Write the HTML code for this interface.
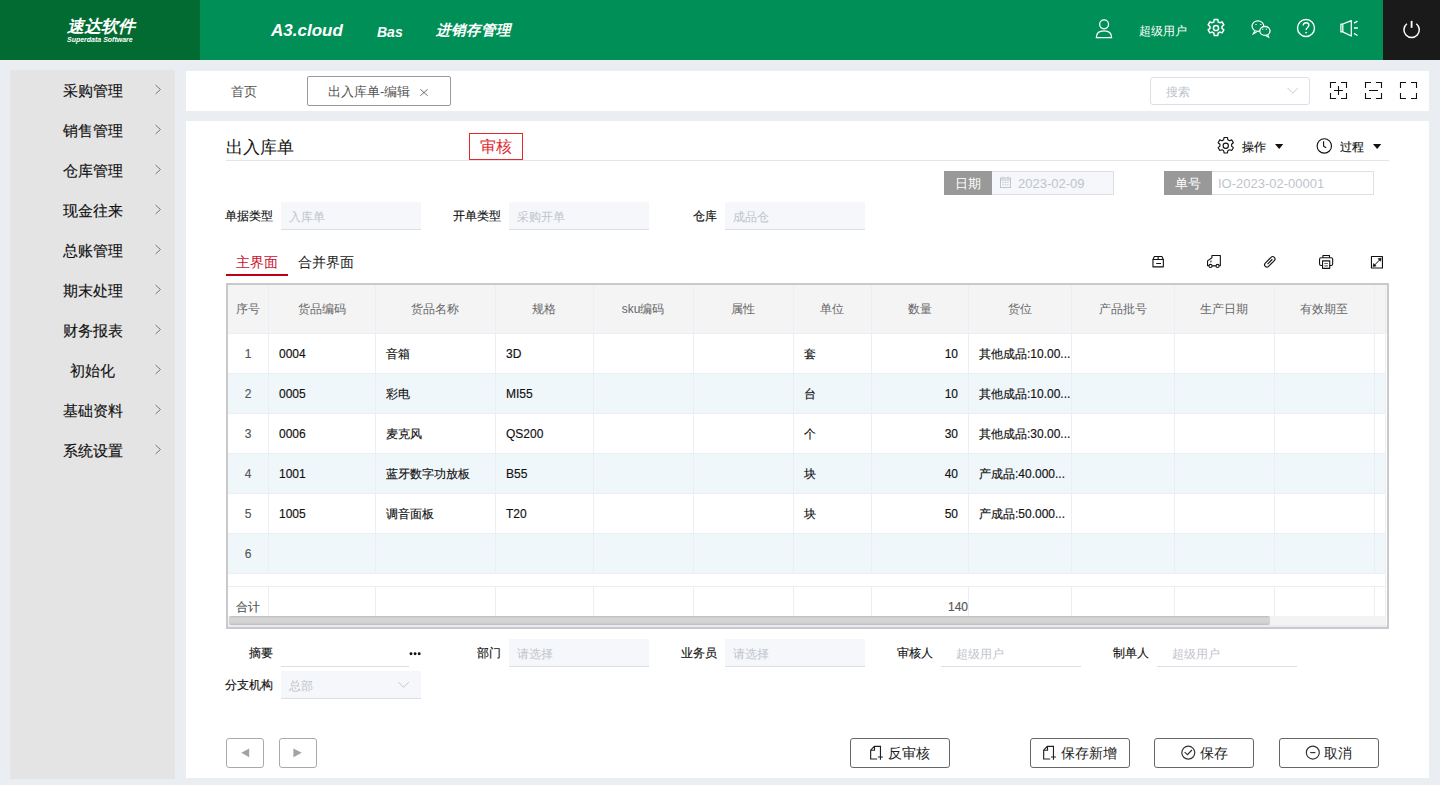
<!DOCTYPE html>
<html><head><meta charset="utf-8">
<style>
*{box-sizing:border-box;margin:0;padding:0}
html,body{width:1440px;height:785px;overflow:hidden;background:#eaedf1;font-family:"Liberation Sans",sans-serif;color:#333}
.a{position:absolute}
.hdr{left:0;top:0;width:1440px;height:60px;background:#008f56}
.logo{left:0;top:0;width:200px;height:60px;background:#016b31}
.wt{color:#fff;white-space:nowrap}
.side{left:10px;top:70px;width:165px;height:709px;background:#e4e4e4}
.si{position:absolute;left:0;width:165px;height:40px;font-size:15px;color:#111;text-align:center;line-height:40px;padding-top:1px;-webkit-text-stroke-width:0.15px}
.chev{position:absolute;left:153px;width:9px;height:9px}
.tabbar{left:186px;top:71px;width:1243px;height:40px;background:#fff}
.panel{left:186px;top:121px;width:1243px;height:657px;background:#fff}
.t{position:absolute;white-space:nowrap;line-height:1}
.lbl{font-size:12px;color:#111;-webkit-text-stroke-width:0.15px}
.inp{position:absolute;background:#f5f7fa;border-bottom:1px solid #dcdfe6;height:28px;width:140px}
.ph{position:absolute;font-size:12px;color:#c0c4cc;line-height:28px;left:8px;top:1px;white-space:nowrap}
.btn{position:absolute;top:738px;height:30px;width:100px;border:1px solid #666;border-radius:3px;background:#fff;font-size:14px;color:#333}
</style></head><body>
<!-- header -->
<div class="a hdr"></div>
<div class="a logo"></div>
<div class="a wt" style="left:67px;top:15px;font-size:17px;font-weight:bold;font-style:italic;letter-spacing:0px">速达软件</div>
<div class="a wt" style="left:67px;top:36px;font-size:7px;font-weight:bold;font-style:italic">Superdata Software</div>
<div class="a wt" style="left:271px;top:21px;font-size:17px;font-weight:bold;font-style:italic">A3.cloud</div>
<div class="a wt" style="left:377px;top:24px;font-size:14px;font-weight:bold;font-style:italic">Bas</div>
<div class="a wt" style="left:436px;top:21px;font-size:14.5px;font-weight:bold;font-style:italic">进销存管理</div>
<div class="a" style="left:1383px;top:0;width:57px;height:60px;background:#1a1a1a"></div>

<!-- header right -->
<div class="a wt" style="left:1139px;top:22.5px;font-size:12px">超级用户</div>
<svg class="a" style="left:1090px;top:10px" width="350" height="40" fill="none" stroke="#fff" stroke-width="1.3">
<circle cx="14.1" cy="14.35" r="4.45"/>
<path d="M6.3 27.7C6.3 23 9.8 20.9 14 20.9C18.2 20.9 21.6 23 21.6 27.7Z"/>
<g transform="translate(116,8)" stroke-width="1.5"><path d="M8.3 1.5h3.4l.5 2.4 1.6.9 2.3-.8 1.7 2.9-1.8 1.6v1.9l1.8 1.6-1.7 2.9-2.3-.8-1.6.9-.5 2.4H8.3l-.5-2.4-1.6-.9-2.3.8-1.7-2.9 1.8-1.6V8.5L2.2 6.9l1.7-2.9 2.3.8 1.6-.9z"/><circle cx="10" cy="10" r="2.6"/></g>
</svg>
<svg class="a" style="left:1240px;top:10px" width="200" height="40" fill="none" stroke="#fff" stroke-width="1.2">
<path d="M14.6 21.2 13.3 23.8 16.6 21.9"/>
<ellipse cx="17.9" cy="16.1" rx="5.9" ry="5.3"/>
<path d="M28 25.2 28.6 27 25.8 25.6" />
<ellipse cx="24.9" cy="20.9" rx="5.1" ry="4.4" fill="#008f56" stroke-width="1.3"/>
<path d="M15.4 14.55h1.2M20.2 14.55h1.2M22.1 19.3h1.2M25.7 19.3h1.2" stroke-width="1.1"/>
<circle cx="66" cy="18" r="8.5" stroke-width="1.4"/>
<path d="M63.2 15.6c0-1.7 1.3-2.9 2.9-2.9 1.6 0 2.8 1.1 2.8 2.6 0 2.1-2.8 2.2-2.8 4.6" stroke-width="1.4"/><circle cx="66.1" cy="22.6" r=".9" fill="#fff" stroke="none"/>
<path d="M100.9 14H102.8L111.3 10.6V26L102.8 21.9H100.9ZM102.8 14V21.9" stroke-width="1.25" stroke-linejoin="round"/>
<path d="M114 13.1 117.5 11.1M114 18H117.8M114 23.4 117.5 25.5" stroke-width="1.3"/>
<path d="M166.9 13.75A7.7 7.7 0 1 0 176.3 13.75" stroke-width="1.5"/>
<path d="M171.6 10.9V17.8" stroke-width="1.8"/>
</svg>

<!-- sidebar -->
<div class="a side">
<div class="si" style="top:0">采购管理</div>
<div class="si" style="top:40px">销售管理</div>
<div class="si" style="top:80px">仓库管理</div>
<div class="si" style="top:120px">现金往来</div>
<div class="si" style="top:160px">总账管理</div>
<div class="si" style="top:200px">期末处理</div>
<div class="si" style="top:240px">财务报表</div>
<div class="si" style="top:280px">初始化</div>
<div class="si" style="top:320px">基础资料</div>
<div class="si" style="top:360px">系统设置</div>
</div>
<svg class="a" style="left:0;top:0" width="180" height="480">
<g fill="none" stroke="#777" stroke-width="1">
<path d="M155.5 85 160.5 89.5 155.5 94"/><path d="M155.5 125 160.5 129.5 155.5 134"/><path d="M155.5 165 160.5 169.5 155.5 174"/>
<path d="M155.5 205 160.5 209.5 155.5 214"/><path d="M155.5 245 160.5 249.5 155.5 254"/><path d="M155.5 285 160.5 289.5 155.5 294"/>
<path d="M155.5 325 160.5 329.5 155.5 334"/><path d="M155.5 365 160.5 369.5 155.5 374"/><path d="M155.5 405 160.5 409.5 155.5 414"/>
<path d="M155.5 445 160.5 449.5 155.5 454"/></g></svg>

<!-- tab bar -->
<div class="a tabbar"></div>
<div class="a t" style="left:231px;top:85px;font-size:13px;color:#555">首页</div>
<div class="a" style="left:307px;top:76px;width:144px;height:30px;border:1px solid #999;border-radius:2px;background:#fff"></div>
<div class="a t" style="left:328px;top:85px;font-size:13px;color:#555">出入库单-编辑</div>
<svg class="a" style="left:419px;top:88px" width="10" height="10" stroke="#6a6a6a" stroke-width="0.95"><path d="M1.3 1.3 8.7 7.7M8.7 1.3 1.3 7.7"/></svg>
<div class="a" style="left:1150px;top:77px;width:160px;height:28px;border:1px solid #dcdfe6;border-radius:3px;background:#fff"></div>
<div class="a t" style="left:1166px;top:86px;font-size:12px;color:#c0c4cc">搜索</div>
<svg class="a" style="left:1286px;top:87px" width="13" height="8" fill="none" stroke="#c0c4cc" stroke-width="0.9"><path d="M1.6 1 6.7 6.1 11.8 1"/></svg>
<svg class="a" style="left:1329px;top:81px" width="90" height="19" fill="none" stroke="#111" stroke-width="1.1">
<path d="M1.5 7V1.5H7M12 1.5H17.5V7M17.5 12V17.5H12M7 17.5H1.5V12M36.5 7V1.5H42M47 1.5H52.5V7M52.5 12V17.5H47M42 17.5H36.5V12M71.5 7V1.5H77M82 1.5H87.5V7M87.5 12V17.5H82M77 17.5H71.5V12"/><path d="M5 9.5H14M9.5 5V14M40 9.5H49"/></svg>

<!-- main panel -->
<div class="a panel"></div>
<div class="a t" style="left:226px;top:139px;font-size:16.5px;color:#111">出入库单</div>
<div class="a" style="left:469px;top:133px;width:54px;height:27px;border:1px solid #e0282e"></div>
<div class="a t" style="left:480px;top:139px;font-size:16px;color:#e0282e">审核</div>
<div class="a" style="left:226px;top:160px;width:1163px;height:1px;background:#e4e4e4"></div>
<svg class="a" style="left:1216.15px;top:136.05px" width="19.5" height="19.5" viewBox="0 0 20 20" fill="none" stroke="#111" stroke-width="1.15" stroke-linejoin="round"><path d="M8.3 1.5h3.4l.5 2.4 1.6.9 2.3-.8 1.7 2.9-1.8 1.6v1.9l1.8 1.6-1.7 2.9-2.3-.8-1.6.9-.5 2.4H8.3l-.5-2.4-1.6-.9-2.3.8-1.7-2.9 1.8-1.6V8.5L2.2 6.9l1.7-2.9 2.3.8 1.6-.9z"/><circle cx="10" cy="10" r="2.7"/></svg>
<div class="a t" style="left:1242px;top:141px;font-size:12px;color:#111;-webkit-text-stroke-width:0.15px">操作</div>
<svg class="a" style="left:1274.7px;top:144px" width="9" height="6"><path d="M0 0h8.3L4.15 5z" fill="#111"/></svg>
<svg class="a" style="left:1315px;top:137px" width="18" height="18" fill="none" stroke="#111" stroke-width="1.1"><circle cx="9.3" cy="8.9" r="7.2"/><path d="M8.6 4.2V9.3L11.2 10.8"/></svg>
<div class="a t" style="left:1340px;top:141px;font-size:12px;color:#111;-webkit-text-stroke-width:0.15px">过程</div>
<svg class="a" style="left:1372.8px;top:144px" width="9" height="6"><path d="M0 0h8.3L4.15 5z" fill="#111"/></svg>

<div class="a" style="left:944px;top:171px;width:48px;height:24px;background:#999"></div>
<div class="a t" style="left:955px;top:177px;font-size:13px;color:#fff">日期</div>
<div class="a" style="left:992px;top:171px;width:122px;height:24px;background:#f5f7fa;border:1px solid #dcdfe6;border-left:0"></div>
<svg class="a" style="left:999px;top:176px" width="13" height="13" fill="none" stroke="#c0c4cc" stroke-width="1"><rect x="1.5" y="2" width="10" height="9.5"/><path d="M1.5 4H11.5M4 0.8V2.5M9 0.8V2.5"/><g fill="#c0c4cc" stroke="none"><rect x="3.5" y="5.8" width="1.2" height="1.2"/><rect x="5.9" y="5.8" width="1.2" height="1.2"/><rect x="8.3" y="5.8" width="1.2" height="1.2"/><rect x="3.5" y="8.2" width="1.2" height="1.2"/><rect x="5.9" y="8.2" width="1.2" height="1.2"/><rect x="8.3" y="8.2" width="1.2" height="1.2"/></g></svg>
<div class="a t" style="left:1018px;top:177px;font-size:13px;color:#c0c4cc">2023-02-09</div>
<div class="a" style="left:1164px;top:171px;width:48px;height:24px;background:#999"></div>
<div class="a t" style="left:1175px;top:177px;font-size:13px;color:#fff">单号</div>
<div class="a" style="left:1212px;top:171px;width:162px;height:24px;background:#fff;border:1px solid #dcdfe6;border-left:0"></div>
<div class="a t" style="left:1218px;top:177px;font-size:13px;color:#c0c4cc">IO-2023-02-00001</div>

<div class="a t lbl" style="left:225px;top:210px">单据类型</div>
<div class="inp" style="left:281px;top:202px"><span class="ph">入库单</span></div>
<div class="a t lbl" style="left:453px;top:210px">开单类型</div>
<div class="inp" style="left:509px;top:202px"><span class="ph">采购开单</span></div>
<div class="a t lbl" style="left:693px;top:210px">仓库</div>
<div class="inp" style="left:725px;top:202px"><span class="ph">成品仓</span></div>

<div class="a t" style="left:236px;top:255px;font-size:14px;color:#c8102e">主界面</div>
<div class="a" style="left:226px;top:274px;width:62px;height:2px;background:#c00018"></div>
<div class="a t" style="left:298px;top:255px;font-size:14px;color:#222">合并界面</div>
<!-- table -->
<div class="a" style="left:226px;top:283px;width:1163px;height:346px;border:2px solid #c9c9c9;background:#fff"></div>
<div class="a" style="left:228px;top:285px;width:1159px;height:48px;background:#f4f4f5"></div>
<div class="a" style="left:228px;top:374px;width:1157px;height:39px;background:#f0f7fb"></div>
<div class="a" style="left:228px;top:454px;width:1157px;height:39px;background:#f0f7fb"></div>
<div class="a" style="left:228px;top:534px;width:1157px;height:39px;background:#f0f7fb"></div>
<div class="a" style="left:228px;top:333px;width:1157px;height:1px;background:#ebeef5"></div>
<div class="a" style="left:228px;top:373px;width:1157px;height:1px;background:#ebeef5"></div>
<div class="a" style="left:228px;top:413px;width:1157px;height:1px;background:#ebeef5"></div>
<div class="a" style="left:228px;top:453px;width:1157px;height:1px;background:#ebeef5"></div>
<div class="a" style="left:228px;top:493px;width:1157px;height:1px;background:#ebeef5"></div>
<div class="a" style="left:228px;top:533px;width:1157px;height:1px;background:#ebeef5"></div>
<div class="a" style="left:228px;top:573px;width:1157px;height:1px;background:#ebeef5"></div>
<div class="a" style="left:228px;top:586px;width:1157px;height:1px;background:#ebeef5"></div>
<div class="a" style="left:268px;top:285px;width:1px;height:289px;background:#ebeef5"></div>
<div class="a" style="left:268px;top:586px;width:1px;height:30px;background:#ebeef5"></div>
<div class="a" style="left:375px;top:285px;width:1px;height:289px;background:#ebeef5"></div>
<div class="a" style="left:375px;top:586px;width:1px;height:30px;background:#ebeef5"></div>
<div class="a" style="left:495px;top:285px;width:1px;height:289px;background:#ebeef5"></div>
<div class="a" style="left:495px;top:586px;width:1px;height:30px;background:#ebeef5"></div>
<div class="a" style="left:593px;top:285px;width:1px;height:289px;background:#ebeef5"></div>
<div class="a" style="left:593px;top:586px;width:1px;height:30px;background:#ebeef5"></div>
<div class="a" style="left:693px;top:285px;width:1px;height:289px;background:#ebeef5"></div>
<div class="a" style="left:693px;top:586px;width:1px;height:30px;background:#ebeef5"></div>
<div class="a" style="left:793px;top:285px;width:1px;height:289px;background:#ebeef5"></div>
<div class="a" style="left:793px;top:586px;width:1px;height:30px;background:#ebeef5"></div>
<div class="a" style="left:871px;top:285px;width:1px;height:289px;background:#ebeef5"></div>
<div class="a" style="left:871px;top:586px;width:1px;height:30px;background:#ebeef5"></div>
<div class="a" style="left:968px;top:285px;width:1px;height:289px;background:#ebeef5"></div>
<div class="a" style="left:968px;top:586px;width:1px;height:30px;background:#ebeef5"></div>
<div class="a" style="left:1071px;top:285px;width:1px;height:289px;background:#ebeef5"></div>
<div class="a" style="left:1071px;top:586px;width:1px;height:30px;background:#ebeef5"></div>
<div class="a" style="left:1174px;top:285px;width:1px;height:289px;background:#ebeef5"></div>
<div class="a" style="left:1174px;top:586px;width:1px;height:30px;background:#ebeef5"></div>
<div class="a" style="left:1274px;top:285px;width:1px;height:289px;background:#ebeef5"></div>
<div class="a" style="left:1274px;top:586px;width:1px;height:30px;background:#ebeef5"></div>
<div class="a" style="left:1374px;top:285px;width:1px;height:289px;background:#ebeef5"></div>
<div class="a" style="left:1374px;top:586px;width:1px;height:30px;background:#ebeef5"></div>
<div class="a" style="left:1385px;top:285px;width:1px;height:341px;background:#ebeef5"></div>
<div class="a th" style="left:228px;width:40px">序号</div>
<div class="a th" style="left:268px;width:107px">货品编码</div>
<div class="a th" style="left:375px;width:120px">货品名称</div>
<div class="a th" style="left:495px;width:98px">规格</div>
<div class="a th" style="left:593px;width:100px">sku编码</div>
<div class="a th" style="left:693px;width:100px">属性</div>
<div class="a th" style="left:793px;width:78px">单位</div>
<div class="a th" style="left:871px;width:97px">数量</div>
<div class="a th" style="left:968px;width:103px">货位</div>
<div class="a th" style="left:1071px;width:103px">产品批号</div>
<div class="a th" style="left:1174px;width:100px">生产日期</div>
<div class="a th" style="left:1274px;width:100px">有效期至</div>
<div class="a td" style="left:228px;width:40px;top:348px;text-align:center;color:#555">1</div>
<div class="a td" style="left:279px;top:348px">0004</div>
<div class="a td" style="left:386px;top:348px">音箱</div>
<div class="a td" style="left:506px;top:348px">3D</div>
<div class="a td" style="left:804px;top:348px">套</div>
<div class="a td" style="left:871px;width:87px;top:348px;text-align:right">10</div>
<div class="a td" style="left:979px;top:348px">其他成品:10.00...</div>
<div class="a td" style="left:228px;width:40px;top:388px;text-align:center;color:#555">2</div>
<div class="a td" style="left:279px;top:388px">0005</div>
<div class="a td" style="left:386px;top:388px">彩电</div>
<div class="a td" style="left:506px;top:388px">MI55</div>
<div class="a td" style="left:804px;top:388px">台</div>
<div class="a td" style="left:871px;width:87px;top:388px;text-align:right">10</div>
<div class="a td" style="left:979px;top:388px">其他成品:10.00...</div>
<div class="a td" style="left:228px;width:40px;top:428px;text-align:center;color:#555">3</div>
<div class="a td" style="left:279px;top:428px">0006</div>
<div class="a td" style="left:386px;top:428px">麦克风</div>
<div class="a td" style="left:506px;top:428px">QS200</div>
<div class="a td" style="left:804px;top:428px">个</div>
<div class="a td" style="left:871px;width:87px;top:428px;text-align:right">30</div>
<div class="a td" style="left:979px;top:428px">其他成品:30.00...</div>
<div class="a td" style="left:228px;width:40px;top:468px;text-align:center;color:#555">4</div>
<div class="a td" style="left:279px;top:468px">1001</div>
<div class="a td" style="left:386px;top:468px">蓝牙数字功放板</div>
<div class="a td" style="left:506px;top:468px">B55</div>
<div class="a td" style="left:804px;top:468px">块</div>
<div class="a td" style="left:871px;width:87px;top:468px;text-align:right">40</div>
<div class="a td" style="left:979px;top:468px">产成品:40.000...</div>
<div class="a td" style="left:228px;width:40px;top:508px;text-align:center;color:#555">5</div>
<div class="a td" style="left:279px;top:508px">1005</div>
<div class="a td" style="left:386px;top:508px">调音面板</div>
<div class="a td" style="left:506px;top:508px">T20</div>
<div class="a td" style="left:804px;top:508px">块</div>
<div class="a td" style="left:871px;width:87px;top:508px;text-align:right">50</div>
<div class="a td" style="left:979px;top:508px">产成品:50.000...</div>
<div class="a td" style="left:228px;width:40px;top:548px;text-align:center;color:#555">6</div>
<div class="a td" style="left:236px;top:601px;color:#555">合计</div>
<div class="a td" style="left:871px;width:97px;top:601px;text-align:right;color:#555">140</div>
<div class="a" style="left:228px;top:616px;width:1157px;height:9px;background:#f3f3f3"></div>
<div class="a" style="left:229px;top:616px;width:1041px;height:9px;background:linear-gradient(#bdbdbd,#d6d6d6 25%,#d2d2d2 75%,#bdbdbd);border-radius:2px"></div>
<div class="a" style="left:228px;top:625px;width:1159px;height:2px;background:#e9ecf4"></div>

<div class="a t lbl" style="left:249px;top:647px">摘要</div>
<div class="a" style="left:281px;top:666px;width:128px;height:1px;background:#dcdfe6"></div>
<svg class="a" style="left:405px;top:649px" width="20" height="10" fill="#111"><circle cx="6" cy="4.8" r="1.45"/><circle cx="10.1" cy="4.8" r="1.45"/><circle cx="14.2" cy="4.8" r="1.45"/></svg>
<div class="a t lbl" style="left:477px;top:647px">部门</div>
<div class="inp" style="left:509px;top:639px"><span class="ph">请选择</span></div>
<div class="a t lbl" style="left:681px;top:647px">业务员</div>
<div class="inp" style="left:725px;top:639px"><span class="ph">请选择</span></div>
<div class="a t lbl" style="left:897px;top:647px">审核人</div>
<div class="inp" style="left:941px;top:639px;background:#fff"><span class="ph" style="left:15px">超级用户</span></div>
<div class="a t lbl" style="left:1113px;top:647px">制单人</div>
<div class="inp" style="left:1157px;top:639px;background:#fff"><span class="ph" style="left:15px">超级用户</span></div>
<div class="a t lbl" style="left:225px;top:679px">分支机构</div>
<div class="inp" style="left:281px;top:671px"><span class="ph">总部</span></div>
<svg class="a" style="left:397px;top:681px" width="13" height="8" fill="none" stroke="#c0c4cc" stroke-width="0.9"><path d="M1.3 1 6.6 6.3 11.9 1"/></svg>

<!-- nav buttons -->
<div class="a" style="left:226px;top:738px;width:38px;height:30px;border:1px solid #aaa;border-radius:3px"></div>
<svg class="a" style="left:230px;top:740px" width="80" height="20" fill="#a3a3a3"><path d="M11.3 12.8 19.2 8.4V17.2Z"/><path d="M63.4 8.4V17.2L71.8 12.8Z"/></svg>
<div class="a" style="left:279px;top:738px;width:38px;height:30px;border:1px solid #aaa;border-radius:3px"></div>


<!-- action buttons -->
<div class="btn" style="left:850px"></div>
<div class="btn" style="left:1030px"></div>
<div class="btn" style="left:1154px"></div>
<div class="btn" style="left:1279px"></div>
<svg class="a" style="left:862px;top:740px" width="24" height="22" fill="none" stroke="#222" stroke-width="1.15"><path d="M15.2 18.95H8.66V10.2L12.3 6.37H18.47V19.7M8.66 10.2H12.5V6.6M15.9 17.04H20.9"/></svg>
<div class="a t" style="left:888px;top:745.5px;font-size:14px;color:#222">反审核</div>
<svg class="a" style="left:1035.2px;top:740px" width="24" height="22" fill="none" stroke="#222" stroke-width="1.15"><path d="M15.2 18.95H8.66V10.2L12.3 6.37H18.47V19.7M8.66 10.2H12.5V6.6M15.9 17.04H20.9"/></svg>
<div class="a t" style="left:1061px;top:745.5px;font-size:14px;color:#222">保存新增</div>
<svg class="a" style="left:1180px;top:745px" width="16" height="16" viewBox="0 0 16 16" fill="none" stroke="#333" stroke-width="1.2"><circle cx="8.3" cy="7.7" r="6.5"/><path d="M4.6 7.1 7.5 9.6 11.9 5"/></svg>
<div class="a t" style="left:1200px;top:745.5px;font-size:14px;color:#222">保存</div>
<svg class="a" style="left:1305px;top:745px" width="16" height="16" viewBox="0 0 16 16" fill="none" stroke="#333" stroke-width="1.2"><circle cx="7.8" cy="7.6" r="6.5"/><path d="M5.2 7.6h5.2"/></svg>
<div class="a t" style="left:1324px;top:745.5px;font-size:14px;color:#222">取消</div>

<!-- table toolbar icons -->
<svg class="a" style="left:1140px;top:250px" width="260" height="24" fill="none" stroke="#111" stroke-width="1.1" stroke-linejoin="round">
<path d="M12.95 16.85V9.45L14.4 6.45H21.9L23.35 9.45V16.85Z"/><path d="M12.95 9.45H23.35M18.15 6.45V9.45M16.2 13.46H21" />
<path d="M71.95 8V5.55H80.35V15.6H79.2M71.95 7.7 67.55 10.9V15.6H68.9M72.1 15.9H76M70.6 12.4 71.3 10.6"/>
<circle cx="70.5" cy="15.9" r="1.55"/><circle cx="77.6" cy="15.9" r="1.55"/>
<g transform="translate(129.8 11.8) rotate(45)"><path d="M0 -3.6V3.2M-2.3 -2V-4.1a2.3 2.3 0 0 1 4.6 0V4.1a2.3 2.3 0 0 1 -4.6 0V-2"/></g>
<path d="M182.9 7.8V5.55H189.5V7.8"/><rect x="179.55" y="7.7" width="13.1" height="7.8" rx="1.6"/>
<rect x="182.55" y="10.85" width="7.2" height="7.5" fill="#fff"/><path d="M184.4 13.5H187.9M184.4 15.9H187.9" stroke="#666"/>
<rect x="231.45" y="6.55" width="11" height="11.5"/>
<path d="M234.3 15.3 240 9.6" stroke-width="1"/><path d="M241.2 8.1 238 8.7 240.6 11.3Z M233 16.6 233.6 13.4 236.2 16Z" fill="#111" stroke-width="0.5"/>
</svg>

<style>
.th{top:303px;font-size:12px;color:#666;text-align:center;white-space:nowrap;line-height:1}
.td{font-size:12px;color:#111;white-space:nowrap;line-height:1;-webkit-text-stroke-width:0.15px}
</style>
</body></html>
